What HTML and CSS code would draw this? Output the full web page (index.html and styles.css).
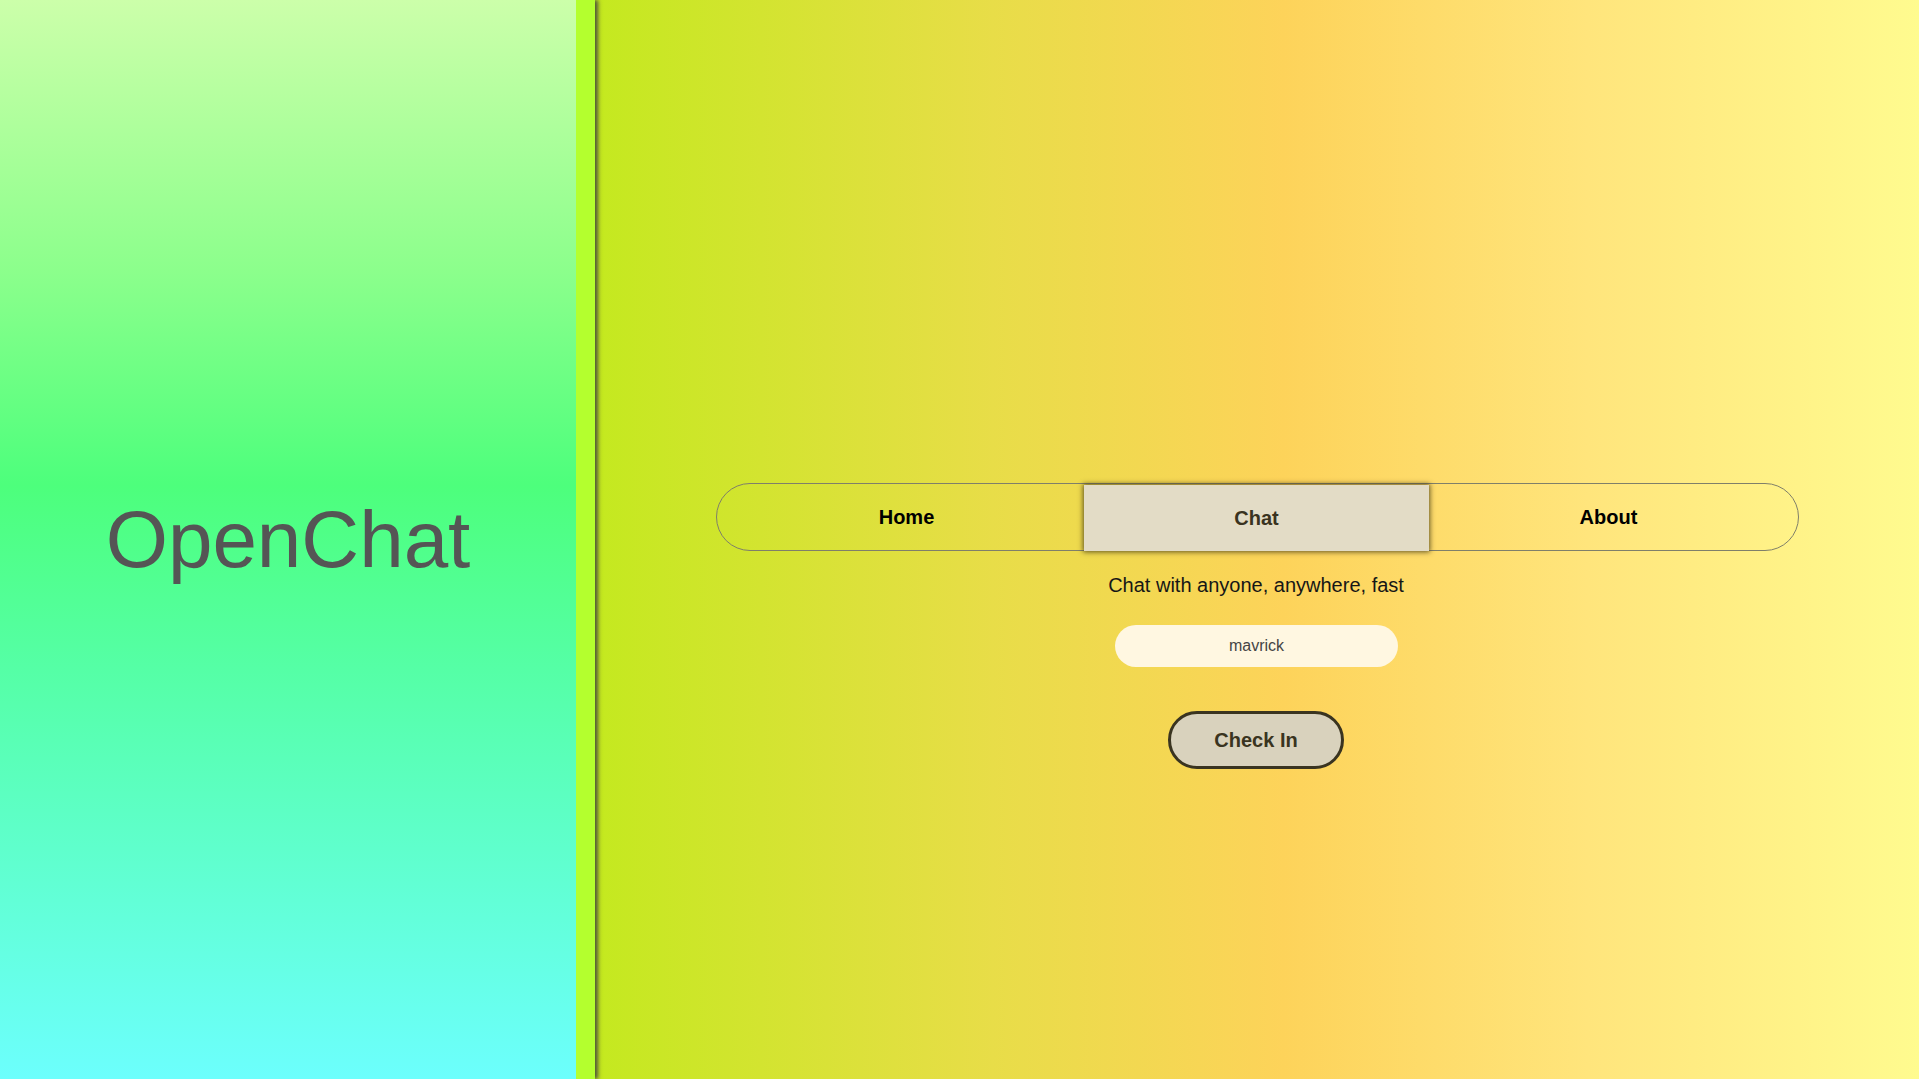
FILE: index.html
```html
<!DOCTYPE html>
<html lang="en">
<head>
<meta charset="utf-8">
<title>OpenChat</title>
<link rel="stylesheet" href="styles.css">
</head>
<body>
<div class="app">
  <aside class="brand">
    <h1 class="brand-title">OpenChat</h1>
  </aside>
  <main class="main">
    <nav class="nav">
      <a class="nav-item nav-home">Home</a>
      <a class="nav-item nav-chat active">Chat</a>
      <a class="nav-item nav-about">About</a>
    </nav>
    <p class="tagline">Chat with anyone, anywhere, fast</p>
    <input class="name-input" type="text" value="mavrick" autofocus>
    <button class="checkin">Check In</button>
  </main>
</div>
</body>
</html>
```
FILE: styles.css
```css
* { box-sizing: border-box; }
html, body { margin: 0; padding: 0; height: 100%; }
body { font-family: "Liberation Sans", Arial, sans-serif; overflow: hidden; }

.app {
  display: flex;
  height: 100vh;
}

.brand {
  width: 595px;
  flex: none;
  border-right: 19px solid #b4ff2e;
  background: linear-gradient(to bottom, #ccffaa 0%, #8cff8c 25%, #4dff7c 45%, #55ffa6 62%, #6cfffd 100%);
  display: flex;
  align-items: center;
  justify-content: center;
  box-shadow: 3px 0 4px rgba(60, 60, 60, 0.85);
  position: relative;
  z-index: 1;
}

.brand-title {
  margin: 0;
  font-weight: 400;
  font-size: 80px;
  color: #555555;
}

.main {
  flex: 1;
  background: linear-gradient(to right, #c4e91f 0%, #e8dd48 30%, #fdd35a 52%, #ffe57c 75%, #fffb8f 100%);
  display: flex;
  flex-direction: column;
  align-items: flex-start;
  padding-top: 483px;
}

.nav {
  width: 1083px;
  height: 68px;
  margin-left: 121px;
  border: 1px solid #7f7f6a;
  border-radius: 34px;
  display: grid;
  grid-template-columns: 367px 345px 1fr;
}

.nav-item {
  display: flex;
  align-items: center;
  justify-content: center;
  font-weight: 700;
  font-size: 20px;
  color: #000;
  text-decoration: none;
}

.nav-home { padding-left: 12px; }
.nav-about { padding-right: 10px; }

.nav-chat {
  background: #e3dcc6;
  color: #3a3320;
  margin-top: 1px;
  margin-bottom: -1px;
  box-shadow: 0 0 5px 1px rgba(60, 50, 20, 0.8);
}

.tagline {
  margin: 23px 0 0 514px;
  font-size: 20px;
  color: #161616;
  width: 294px;
  text-align: center;
  white-space: nowrap;
  display: flex;
  justify-content: center;
}

.name-input {
  margin: 28px 0 0 520px;
  width: 283px;
  height: 42px;
  border: none;
  outline: none;
  border-radius: 21px;
  background: #fff7e1;
  text-align: center;
  font-family: "Liberation Sans", Arial, sans-serif;
  font-size: 16px;
  color: #454545;
  caret-color: #222;
}

.checkin {
  margin: 44px 0 0 573px;
  width: 176px;
  height: 58px;
  border: 3px solid #3a3420;
  border-radius: 29px;
  background: #d9d2bd;
  font-family: "Liberation Sans", Arial, sans-serif;
  font-weight: 700;
  font-size: 20px;
  color: #3a3420;
}
```
